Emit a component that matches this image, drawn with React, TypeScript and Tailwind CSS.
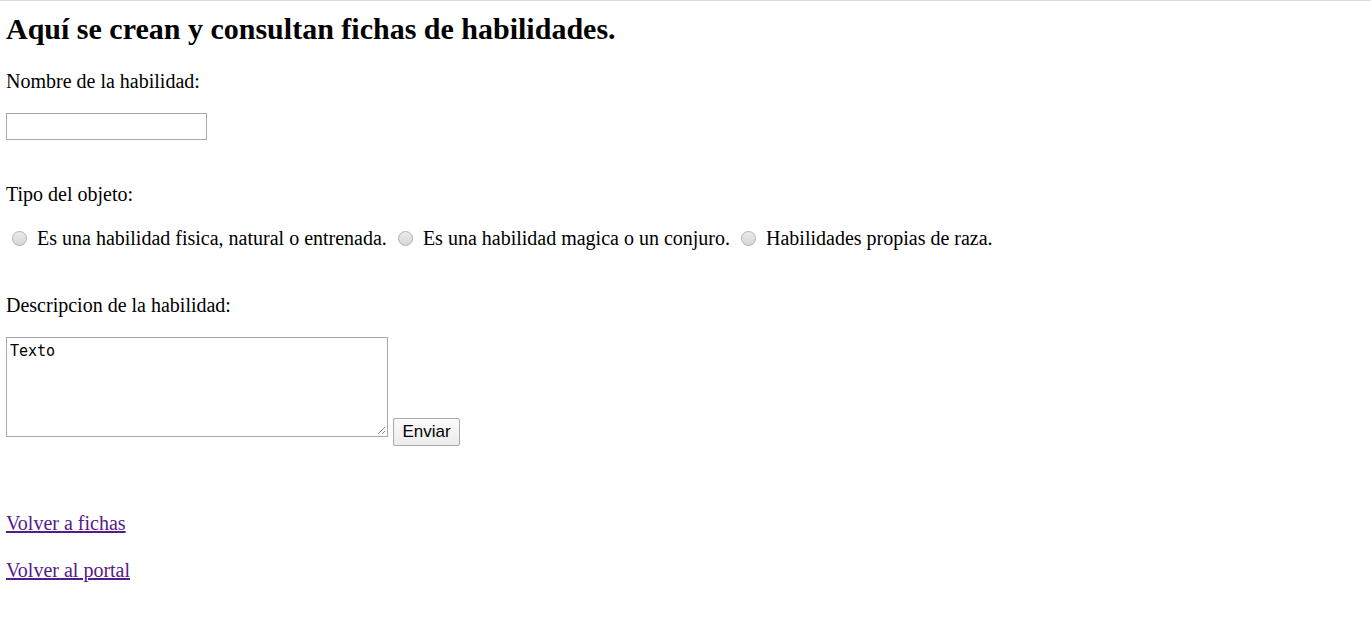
export default function App() {
  const opciones = [
    'Es una habilidad fisica, natural o entrenada.',
    'Es una habilidad magica o un conjuro.',
    'Habilidades propias de raza.',
  ];

  return (
    <div className="min-h-[640px] bg-white border-t border-[#dadce0] px-[6px] text-black font-['Liberation_Serif',serif]">
      <h1 className="mt-[10px] text-[30px] leading-[36px] font-bold">Aquí se crean y consultan fichas de habilidades.</h1>

      <p className="mt-[23px] text-[20px] leading-[23px]">Nombre de la habilidad:</p>
      <input type="text" className="mt-[20px] block w-[201px] h-[27px] border border-[#a9a9a9] bg-white px-1 text-[16px] outline-none" />

      <p className="mt-[43px] text-[20px] leading-[23px]">Tipo del objeto:</p>
      <div className="mt-[21px] flex items-center gap-[5px] text-[20px] leading-[23px]">
        {opciones.map((o) => (
          <label key={o} className="flex items-center">
            <span className="ml-[6px] mr-[10px] block w-[15px] h-[15px] rounded-full border border-[#b0b0b0] bg-gradient-to-b from-[#ececec] to-[#d6d6d6]" />
            <span>{o}</span>
          </label>
        ))}
      </div>

      <p className="mt-[44px] text-[20px] leading-[23px]">Descripcion de la habilidad:</p>
      <div className="mt-[20px] flex items-end">
        <div className="relative w-[382px] h-[100px] border border-[#a9a9a9] bg-white">
          <span className="absolute left-[3px] top-[4px] font-['DejaVu_Sans_Mono','Liberation_Mono',monospace] text-[15px] leading-[18px]">Texto</span>
          <svg className="absolute right-[1px] bottom-[1px]" width="10" height="10" viewBox="0 0 10 10">
            <path d="M9 2L2 9M9 6L6 9" stroke="#8a8a8a" strokeWidth="1" />
          </svg>
        </div>
        <button type="button" className="ml-[5px] mb-[-9px] w-[67px] h-[28px] border border-[#a9a9a9] rounded-[2px] bg-gradient-to-b from-[#fbfbfb] to-[#ececec] font-['Liberation_Sans',Arial,sans-serif] text-[17px] leading-[18px]">Enviar</button>
      </div>

      <p className="mt-[75px] text-[20px] leading-[23px]">
        <a href="#" className="text-[#551a8b] underline">Volver a fichas</a>
      </p>
      <p className="mt-[24px] text-[20px] leading-[23px]">
        <a href="#" className="text-[#551a8b] underline">Volver al portal</a>
      </p>
    </div>
  );
}
